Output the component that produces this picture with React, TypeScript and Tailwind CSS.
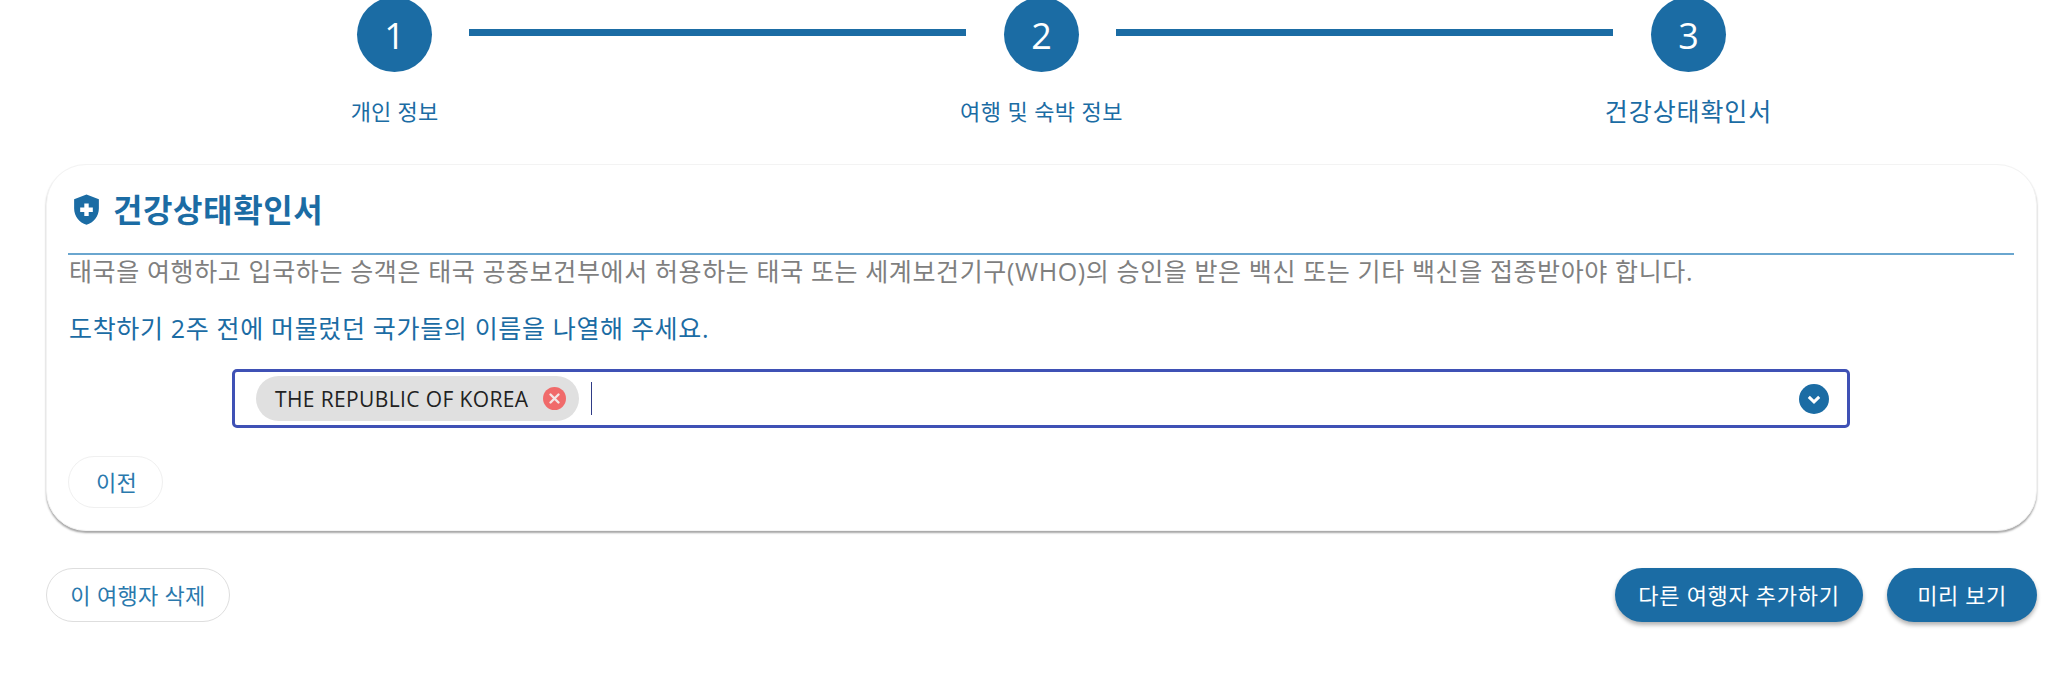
const font = "font-['Open_Sans','Noto_Sans_CJK_KR',sans-serif]";

function Circle({ n }: { n: string }) {
  return (
    <div className="flex h-[75px] w-[75px] shrink-0 items-center justify-center rounded-full bg-[#1b6ca4] pt-[2px] text-[36px] text-white">
      {n}
    </div>
  );
}

function Line() {
  return <div className="ml-[37px] mr-[38px] mb-[4px] h-[7px] w-[497px] shrink-0 bg-[#1b6ca4]" />;
}

export default function App() {
  return (
    <div className={`h-[687px] w-[2054px] overflow-hidden bg-white ${font}`}>
      <div className="-mt-[3px] flex items-center pl-[357px]">
        <Circle n="1" />
        <Line />
        <Circle n="2" />
        <Line />
        <Circle n="3" />
      </div>
      <div className="mt-[24px] grid grid-cols-[647px_647px_647px] items-center pl-[71px] text-[#1b6ca4]">
        <div className="text-center text-[22px] leading-[30px] tracking-[0.2px]">개인 정보</div>
        <div className="text-center text-[22px] leading-[30px] tracking-[0.4px]">여행 및 숙박 정보</div>
        <div className="text-center text-[25px] leading-[30px] tracking-[0.9px]">건강상태확인서</div>
      </div>

      <section className="mx-[46px] mt-[38px] h-[367px] w-[1991px] rounded-[40px] border border-[#f3f3f3] bg-white px-[21px] pt-[24px] shadow-[0_2px_2px_rgba(0,0,0,0.35)]">
        <div className="flex h-[41px] items-center gap-[10px] pl-[2px] text-[#1b6ca4]">
          <svg width="33" height="33" viewBox="0 0 24 24" preserveAspectRatio="none" className="shrink-0">
            <path
              fill="#1b6ca4"
              fillRule="evenodd"
              d="M12 1 3 4.6v6.6c0 5.5 3.8 10.6 9 11.8 5.2-1.2 9-6.3 9-11.8V4.6L12 1Zm-1.6 6.6h3.2v3h3v3.2h-3v3h-3.2v-3h-3v-3.2h3v-3Z"
            />
          </svg>
          <h1 className="text-[32px] font-bold leading-[41px] tracking-[0.6px]">건강상태확인서</h1>
        </div>
        <div className="mr-[1px] mt-[23px] h-[2px] bg-[#6aa6cf]" />
        <p className="mt-0 whitespace-nowrap pl-[1px] text-[25px] leading-[32px] tracking-[0.62px] text-[#7f7f7f]">
          태국을 여행하고 입국하는 승객은 태국 공중보건부에서 허용하는 태국 또는 세계보건기구(WHO)의 승인을 받은 백신 또는 기타 백신을 접종받아야 합니다.
        </p>
        <p className="mt-[25px] pl-[1px] text-[25px] leading-[32px] tracking-[0.66px] text-[#1b6ca4]">
          도착하기 2주 전에 머물렀던 국가들의 이름을 나열해 주세요.
        </p>
        <div className="ml-[164px] mt-[25px] flex h-[59px] w-[1618px] items-center rounded-[5px] border-[3px] border-[#3f51b5] pl-[21px] pr-[18px]">
          <div className="flex h-[45px] w-[323px] items-center rounded-full bg-[#e0e0e0] pl-[19px] text-[21px] tracking-[0.38px] text-[#222]">
            <span className="whitespace-nowrap pt-[2px]">THE REPUBLIC OF KOREA</span>
            <svg width="23" height="23" viewBox="0 0 23 23" className="ml-[14px] shrink-0">
              <circle cx="11.5" cy="11.5" r="11.5" fill="#f06a6a" />
              <path d="M7.5 7.5l8 8M15.5 7.5l-8 8" stroke="#f3e6e6" strokeWidth="2.4" strokeLinecap="round" />
            </svg>
          </div>
          <div className="ml-[12px] h-[33px] w-px bg-[#2f3c86]" />
          <div className="flex-1" />
          <svg width="30" height="30" viewBox="0 0 30 30" className="shrink-0">
            <circle cx="15" cy="15" r="15" fill="#1b6ca4" />
            <path d="M9.8 12.8 15 17.8l5.2-5" fill="none" stroke="#fff" strokeWidth="3" />
          </svg>
        </div>
        <button className="mt-[28px] block h-[52px] w-[95px] rounded-full border border-[#f0f0f0] bg-white pl-[2px] text-[22px] tracking-[0.2px] text-[#2a79ad]">
          이전
        </button>
      </section>

      <div className="mx-[46px] mt-[37px] flex w-[1991px] items-center">
        <button className="h-[54px] w-[184px] rounded-full border border-[#dedede] bg-white text-[22px] tracking-[0.3px] text-[#2a79ad]">
          이 여행자 삭제
        </button>
        <div className="flex-1" />
        <button className="h-[54px] w-[248px] rounded-full bg-[#1b6ca4] text-[22px] tracking-[0.7px] text-white shadow-[0_3px_4px_rgba(0,0,0,0.3)]">
          다른 여행자 추가하기
        </button>
        <button className="ml-[24px] h-[54px] w-[150px] rounded-full bg-[#1b6ca4] text-[22px] tracking-[0.6px] text-white shadow-[0_3px_4px_rgba(0,0,0,0.3)]">
          미리 보기
        </button>
      </div>
    </div>
  );
}
